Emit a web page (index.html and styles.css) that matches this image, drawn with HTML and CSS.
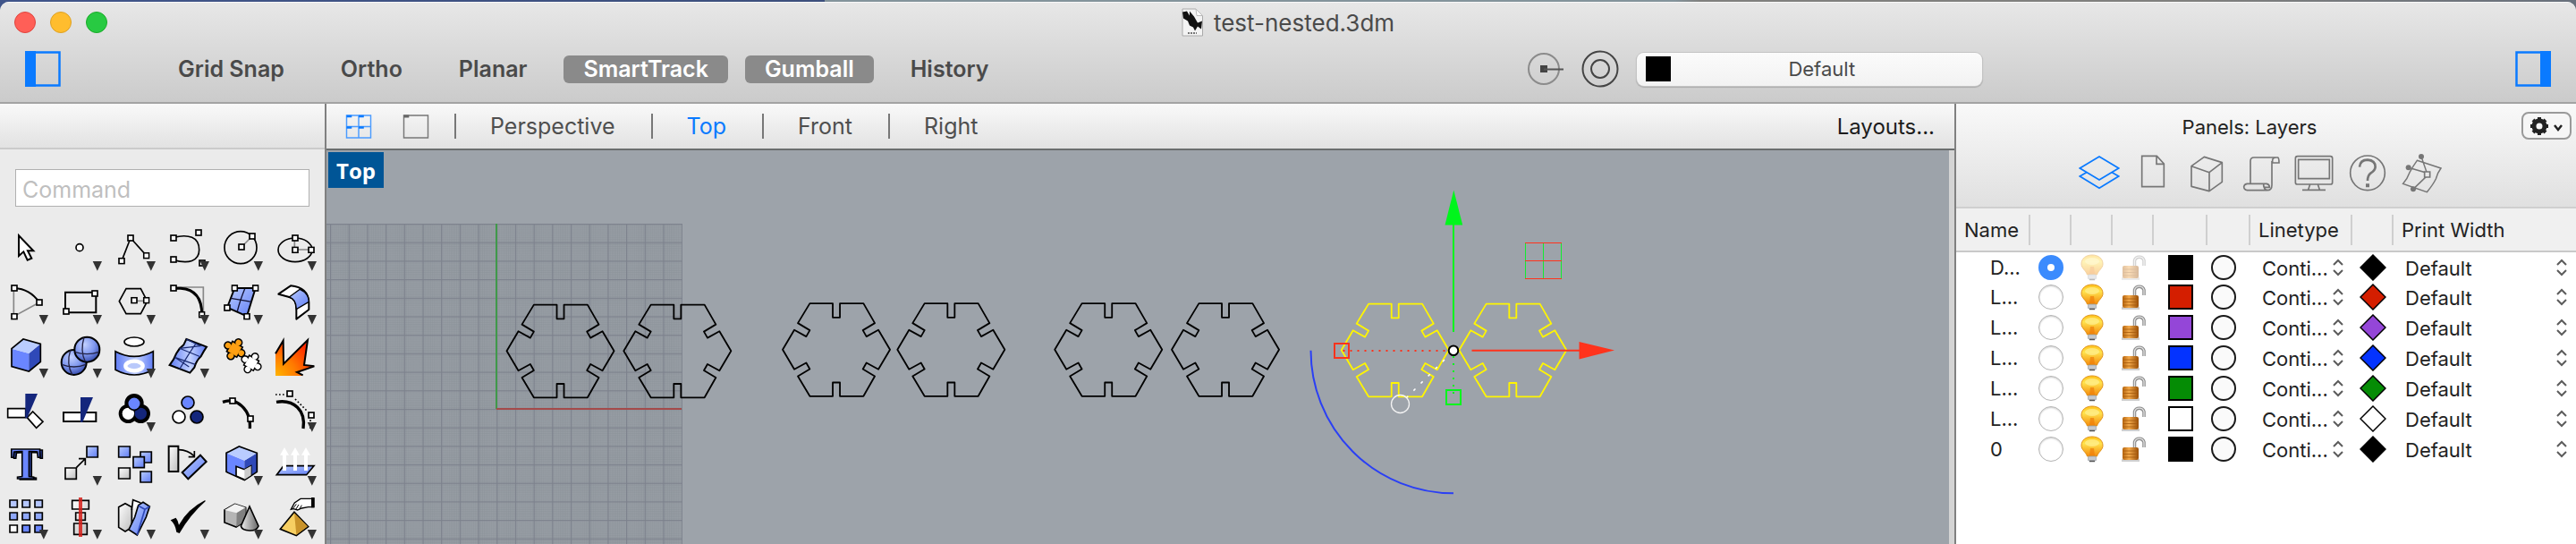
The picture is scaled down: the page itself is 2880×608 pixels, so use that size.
FILE: index.html
```html
<!DOCTYPE html>
<html lang="en">
<head>
<meta charset="utf-8">
<title>test-nested.3dm</title>
<link rel="stylesheet" href="styles.css">
</head>
<body>
<svg class="defs" aria-hidden="true">
  <defs>
    <linearGradient id="blue" x1="0" y1="0" x2="1" y2="1"><stop offset="0" stop-color="#b9ccff"/><stop offset="1" stop-color="#5f7cf4"/></linearGradient>
    <linearGradient id="grey" x1="0" y1="0" x2="1" y2="1"><stop offset="0" stop-color="#fff"/><stop offset="1" stop-color="#bdbdbd"/></linearGradient>
    <linearGradient id="cone" x1="0" y1="0" x2="1" y2="0"><stop offset="0" stop-color="#eee"/><stop offset="1" stop-color="#666"/></linearGradient>
    <linearGradient id="sheet" x1="0" y1="0" x2="1" y2="0"><stop offset="0" stop-color="#5f7cf4"/><stop offset=".55" stop-color="#c3d2ff"/><stop offset="1" stop-color="#5f7cf4"/></linearGradient>
    <radialGradient id="ball" cx=".4" cy=".3" r=".8"><stop offset="0" stop-color="#c3d1ff"/><stop offset=".5" stop-color="#7f97ee"/><stop offset="1" stop-color="#24389c"/></radialGradient>
    <radialGradient id="fire" cx="0" cy="1" r="1.1"><stop offset="0" stop-color="#ffb400"/><stop offset=".5" stop-color="#ff7a00"/><stop offset="1" stop-color="#ff2a00"/></radialGradient>
    <linearGradient id="glass" x1="0" y1="0" x2="0" y2="1"><stop offset="0" stop-color="#ffc21a"/><stop offset=".35" stop-color="#ffe34d"/><stop offset="1" stop-color="#f58a0c"/></linearGradient>
    <linearGradient id="brass" x1="0" y1="0" x2="1" y2="0"><stop offset="0" stop-color="#b5640e"/><stop offset=".4" stop-color="#f3a94a"/><stop offset="1" stop-color="#9a4f08"/></linearGradient>
    <pattern id="minor" x="369.5" y="250.4" width="2.069" height="2.069" patternUnits="userSpaceOnUse"><path d="M0 .35H2.07M.35 0V2.07" stroke="#8b9199" stroke-width=".4"/></pattern>
    <pattern id="major" x="369" y="250" width="20.69" height="20.69" patternUnits="userSpaceOnUse"><path d="M0 .6H20.7M.6 0V20.7" stroke="#7d828d" stroke-width="1.200"/></pattern>
  </defs>
  <symbol id="node" viewBox="0 0 24 24"><rect x="3" y="3" width="18" height="18" fill="#fff" stroke="#000" stroke-width="5"/></symbol>
  <symbol id="more" viewBox="0 0 180 180"><path d="M131 126H162L146.500 158Z" fill="#333"/></symbol>
  <symbol id="jigsaw" viewBox="0 0 90 90" overflow="visible"><g transform="rotate(30 45 45)"><rect x="27" y="27" width="36" height="36"/><circle cx="45" cy="18" r="10"/><circle cx="72" cy="45" r="10"/><circle cx="45" cy="72" r="10"/><circle cx="18" cy="45" r="10"/></g></symbol>
  <symbol id="hex" viewBox="-190 -165 380 330"><path d="M-89-155H-12V-108H12V-155H91L129-89 89-65 101-44 141-66 180 0 141 66 101 44 89 65 129 89 91 156H12V110H-12V156H-89L-129 89-89 65-101 44-141 66-180 0-141-66-101-44-89-65-129-89Z" fill="none" stroke="currentColor" stroke-width="5.500" stroke-linejoin="round"/></symbol>
  <symbol id="bulb" viewBox="0 0 26 30"><path d="M13 1C6 1 1 5 1 11C1 16 6 18 7.500 23H18.500C20 18 25 16 25 11C25 5 20 1 13 1Z" fill="url(#glass)" stroke="#e0931a"/><ellipse cx="13" cy="8" rx="8" ry="4" fill="#fff4a0" opacity=".6"/><path d="M10 22 11 14H15L16 22Z" fill="#ee7d08" opacity=".7"/><rect x="8.500" y="23" width="9" height="5" rx="1" fill="#c4c8cc" stroke="#8d9298" stroke-width=".6"/><path d="M10 28.500H16" stroke="#555" stroke-width="1.500"/></symbol>
  <symbol id="lock" viewBox="0 0 28 30"><path d="M15.500 14V7A5.500 5.500 0 0 1 26 7V13" fill="none" stroke="#8c8c8c" stroke-width="3.500"/><path d="M15.500 14V7A5.500 5.500 0 0 1 26 7V13" fill="none" stroke="#e2e2e2" stroke-width="1.300"/><path d="M1 27.500H21" stroke="#cfcfcf" stroke-width="3"/><rect x="2" y="13" width="18" height="14" rx="2" fill="url(#brass)"/><path d="M3 17H19M3 20.500H19M3 24H19" stroke="#a65b0c" stroke-width=".8"/></symbol>
  <symbol id="step" viewBox="0 0 12 20"><path d="M1 7 6 2 11 7M1 13 6 18 11 13" fill="none" stroke="#5c5c5c" stroke-width="2"/></symbol>
  <symbol id="diamond" viewBox="0 0 30 30"><path d="M15 1 29 15 15 29 1 15Z" fill="currentColor" stroke="#000" stroke-width="1.500"/></symbol>
</svg>

<div class="window">
  <header class="chrome">
    <div class="titlebar">
      <div class="lights"><button class="light close" aria-label="Close"></button><button class="light minimise" aria-label="Minimise"></button><button class="light zoom" aria-label="Zoom"></button></div>
      <h1 class="title">
        <svg class="doc" viewBox="0 0 24 31"><path d="M1 .5H16L23.500 8V30.500H1Z" fill="#f3f3f3" stroke="#aaa"/><path d="M16 .5 17 8H23.500Z" fill="#fff" stroke="#bbb"/><path d="M1 4 6 3 9 8 9 3 14 9 18 16 23 14 22 23 18 20 15 25 13 21 9 19 7 14 2 11Z" fill="#111"/><path d="M7 27.500H17" stroke="#777" stroke-width="2" stroke-dasharray="2 1"/></svg>
        test-nested.3dm
      </h1>
    </div>
    <div class="toolbar">
      <button class="bare" aria-label="Toggle left sidebar"><svg class="side" viewBox="0 0 40 40"><path d="M1.500 1.500H38.500V38.500H1.500Z" fill="none" stroke="#0a7aff" stroke-width="2.500"/><path d="M0 0H12V40H0Z" fill="#0a7aff"/></svg></button>
      <nav class="modes">
        <button class="mode">Grid Snap</button><button class="mode">Ortho</button><button class="mode">Planar</button><button class="mode on">SmartTrack</button><button class="mode on">Gumball</button><button class="mode">History</button>
      </nav>
      <div class="layer">
        <button class="bare" aria-label="Record history"><svg class="rec" viewBox="0 0 40 40"><circle cx="18" cy="20" r="17" fill="none" stroke="#8b8b8b" stroke-width="2"/><path d="M14 16H22V24H14Z" fill="#444"/><path d="M18 20.500H40" stroke="#555" stroke-width="2"/></svg></button>
        <button class="bare" aria-label="Object properties"><svg class="ring" viewBox="0 0 42 42"><circle cx="21" cy="21" r="19.500" fill="none" stroke="#444" stroke-width="2"/><circle cx="21" cy="21" r="10" fill="none" stroke="#444" stroke-width="2"/></svg></button>
        <button class="picker"><span class="chip"></span><span class="picked">Default</span></button>
      </div>
      <button class="bare" aria-label="Toggle right sidebar"><svg class="side" viewBox="0 0 40 40"><path d="M1.500 1.500H38.500V38.500H1.500Z" fill="none" stroke="#0a7aff" stroke-width="2.500"/><path d="M28 0H40V40H28Z" fill="#0a7aff"/></svg></button>
    </div>
  </header>

  <div class="body">
    <aside class="tools">
      <div class="strip"></div>
      <div class="prompt"><input class="command" type="text" placeholder="Command" aria-label="Command"></div>
      <div class="palette">
        <button class="tool" aria-label="Select"><svg viewBox="0 0 180 180"><path d="M63 40V108L79 94 92 122 106 116 93 91H112Z" fill="#fff" stroke="#000" stroke-width="6"/></svg></button>
        <button class="tool" aria-label="Point"><svg viewBox="0 0 180 180"><circle cx="87" cy="80" r="12" fill="#fff" stroke="#000" stroke-width="5"/><use href="#more"/></svg></button>
        <button class="tool" aria-label="Polyline"><svg viewBox="0 0 180 180"><path d="M48 125 78 48 131 107" fill="none" stroke="#000" stroke-width="5"/><use href="#node" x="36" y="113" width="24" height="24"/><use href="#node" x="66" y="36" width="24" height="24"/><use href="#node" x="119" y="95" width="24" height="24"/><use href="#more"/></svg></button>
        <button class="tool" aria-label="Curve"><svg viewBox="0 0 180 180"><path d="M42 46C92 34 128 44 128 88C128 126 92 136 42 122" fill="none" stroke="#000" stroke-width="5"/><use href="#node" x="30" y="36" width="24" height="24"/><use href="#node" x="30" y="108" width="24" height="24"/><use href="#node" x="114" y="18" width="24" height="24"/><use href="#node" x="126" y="120" width="24" height="24"/><use href="#more"/></svg></button>
        <button class="tool" aria-label="Circle"><svg viewBox="0 0 180 180"><circle cx="87" cy="80" r="54" fill="none" stroke="#000" stroke-width="5"/><path d="M90 78 126 42" stroke="#888" stroke-width="5"/><use href="#node" x="78" y="66" width="24" height="24"/><use href="#node" x="114" y="30" width="24" height="24"/><use href="#more"/></svg></button>
        <button class="tool" aria-label="Ellipse"><svg viewBox="0 0 180 180"><ellipse cx="90" cy="88" rx="57" ry="40" fill="none" stroke="#000" stroke-width="5"/><path d="M88 50V87H142" fill="none" stroke="#888" stroke-width="5"/><use href="#node" x="78" y="36" width="24" height="24"/><use href="#node" x="78" y="76" width="24" height="24"/><use href="#node" x="132" y="76" width="24" height="24"/><use href="#more"/></svg></button>

        <button class="tool" aria-label="Arc"><svg viewBox="0 0 180 180"><path d="M46 36V131L132 84" fill="none" stroke="#888" stroke-width="5"/><path d="M48 36Q100 38 132 84" fill="none" stroke="#000" stroke-width="6"/><use href="#node" x="36" y="24" width="24" height="24"/><use href="#node" x="120" y="72" width="24" height="24"/><use href="#node" x="36" y="119" width="24" height="24"/><use href="#more"/></svg></button>
        <button class="tool" aria-label="Rectangle"><svg viewBox="0 0 180 180"><path d="M39 50H142V118H39Z" fill="none" stroke="#000" stroke-width="6"/><use href="#node" x="126" y="42" width="24" height="24"/><use href="#node" x="30" y="102" width="24" height="24"/><use href="#more"/></svg></button>
        <button class="tool" aria-label="Polygon"><svg viewBox="0 0 180 180"><path d="M40 80 63 38H112L134 80 112 122H63Z" fill="none" stroke="#000" stroke-width="5"/><path d="M90 79H131" stroke="#888" stroke-width="5"/><use href="#node" x="78" y="65" width="24" height="24"/><use href="#node" x="119" y="65" width="24" height="24"/><use href="#more"/></svg></button>
        <button class="tool" aria-label="Fillet"><svg viewBox="0 0 180 180"><path d="M42 33H142V126" fill="none" stroke="#888" stroke-width="5"/><path d="M42 37H66Q138 42 137 126" fill="none" stroke="#000" stroke-width="9"/><use href="#node" x="30" y="24" width="24" height="24"/><use href="#node" x="125" y="113" width="24" height="24"/><use href="#more"/></svg></button>
        <button class="tool" aria-label="Surface from points"><svg viewBox="0 0 180 180"><path d="M67 36H137L108 130 42 101Z" fill="url(#blue)" stroke="#000" stroke-width="6"/><path d="M54 70Q90 76 124 82M101 38Q84 80 76 114" fill="none" stroke="#113" stroke-width="4"/><use href="#node" x="55" y="24" width="24" height="24"/><use href="#node" x="125" y="24" width="24" height="24"/><use href="#node" x="30" y="90" width="24" height="24"/><use href="#node" x="96" y="119" width="24" height="24"/><use href="#more"/></svg></button>
        <button class="tool" aria-label="Extend surface"><svg viewBox="0 0 180 180"><path d="M34 56 75 28Q134 34 136 84V108L94 140V106Q94 70 70 66Z" fill="#fff" stroke="#000" stroke-width="6" stroke-linejoin="round"/><path d="M70 66 106 40Q136 54 136 82L94 107Q94 74 70 66Z" fill="url(#blue)" stroke="#000" stroke-width="4"/><use href="#more"/></svg></button>

        <button class="tool" aria-label="Box"><svg viewBox="0 0 180 180"><path d="M39 59 97 75V135L39 119Z" fill="#6a86ff"/><path d="M97 75 136 43V103L97 135Z" fill="#2f49b8"/><path d="M39 59 78 27 136 43 97 75Z" fill="#b9ccff"/><path d="M39 59 78 27 136 43V103L97 135 39 119Z" fill="none" stroke="#000" stroke-width="5"/><use href="#more"/></svg></button>
        <button class="tool" aria-label="Solids"><svg viewBox="0 0 180 180"><circle cx="68" cy="105" r="42" fill="url(#ball)" stroke="#000" stroke-width="6"/><path d="M27 112Q68 128 108 112M56 64Q42 110 62 146" fill="none" stroke="#224" stroke-width="4"/><circle cx="112" cy="62" r="42" fill="url(#ball)" stroke="#000" stroke-width="6"/><path d="M71 70Q112 84 152 70M102 21Q88 66 106 103" fill="none" stroke="#224" stroke-width="4"/><use href="#more"/></svg></button>
        <button class="tool" aria-label="Project curve"><svg viewBox="0 0 180 180"><ellipse cx="90" cy="36" rx="33" ry="15" fill="#fff" stroke="#000" stroke-width="5"/><path d="M27 68Q90 102 154 68V130Q90 164 27 130Z" fill="url(#sheet)" stroke="#000" stroke-width="5"/><ellipse cx="90" cy="117" rx="29" ry="16" fill="#b9c9fb" stroke="#fff" stroke-width="13"/><use href="#more"/></svg></button>
        <button class="tool" aria-label="Surface edit"><svg viewBox="0 0 180 180"><path d="M85 27 153 53Q144 66 134 85Q118 100 112 122L97 140 29 114Q44 96 52 74Q62 56 76 46Z" fill="url(#sheet)" stroke="#000" stroke-width="6"/><path d="M62 58 132 86M46 88 115 112M118 40 94 76 62 128M85 27 132 50 62 58M46 88 94 120" fill="none" stroke="#1a2a70" stroke-width="3.500"/><use href="#more"/></svg></button>
        <button class="tool" aria-label="Join"><svg viewBox="0 0 180 180">
          <use href="#jigsaw" x="24" y="18" width="86" height="86" fill="#ffa013" stroke="#000" stroke-width="10"/><use href="#jigsaw" x="24" y="18" width="86" height="86" fill="#ffa013"/>
          <use href="#jigsaw" x="82" y="66" width="82" height="82" fill="#fff" stroke="#000" stroke-width="10"/><use href="#jigsaw" x="82" y="66" width="82" height="82" fill="#fff"/></svg></button>
        <button class="tool" aria-label="Explode"><svg viewBox="0 0 180 180"><path d="M24 76 50 32V110L132 30 120 114 154 118 96 138 116 150H24Z" fill="url(#fire)"/><path d="M24 76 50 32 51 110 132 30 120 114 154 118 96 138 116 148" fill="none" stroke="#000" stroke-width="6"/></svg></button>

        <button class="tool" aria-label="Trim"><svg viewBox="0 0 180 180"><path d="M26 80H86V110H26ZM110 90 144 124 122 145 91 110Z" fill="#fff" stroke="#000" stroke-width="5"/><path d="M85 30H126L91 112H85Z" fill="#14267c"/></svg></button>
        <button class="tool" aria-label="Split"><svg viewBox="0 0 180 180"><path d="M33 93H142V123H33Z" fill="#fff" stroke="#000" stroke-width="6"/><path d="M90 42H132L97 125H90Z" fill="#14267c"/></svg></button>
        <button class="tool" aria-label="Group"><svg viewBox="0 0 180 180"><g stroke="#000" stroke-width="20"><circle cx="90" cy="62" r="22"/><circle cx="70" cy="97" r="22"/><circle cx="112" cy="97" r="22"/></g><circle cx="70" cy="97" r="20" fill="#fff"/><circle cx="112" cy="97" r="20" fill="#14267c"/><circle cx="90" cy="63" r="22" fill="#6a86ff" stroke="#000" stroke-width="5"/><use href="#more"/></svg></button>
        <button class="tool" aria-label="Ungroup"><svg viewBox="0 0 180 180"><g stroke="#000" stroke-width="5"><circle cx="90" cy="60" r="21" fill="#6a86ff"/><circle cx="60" cy="108" r="21" fill="#fff"/><circle cx="120" cy="108" r="21" fill="#14267c"/></g></svg></button>
        <button class="tool" aria-label="Edit points"><svg viewBox="0 0 180 180"><path d="M27 58Q52 50 68 56Q122 82 118 147" fill="none" stroke="#000" stroke-width="10"/><use href="#node" x="48" y="42" width="24" height="24"/><use href="#node" x="108" y="102" width="24" height="24"/></svg></button>
        <button class="tool" aria-label="Control points"><svg viewBox="0 0 180 180"><path d="M27 58C86 48 126 86 117 147" fill="none" stroke="#000" stroke-width="10"/><path d="M24 33H60M90 48 132 90M141 118V150" fill="none" stroke="#000" stroke-width="5" stroke-dasharray="5 7"/><use href="#node" x="60" y="18" width="24" height="24"/><use href="#node" x="132" y="90" width="24" height="24"/><use href="#more"/></svg></button>

        <button class="tool" aria-label="Text"><svg viewBox="0 0 180 180"><text class="solid-text dark" x="94" y="138">T</text><text class="solid-text" x="86" y="136">T</text></svg></button>
        <button class="tool" aria-label="Move"><svg viewBox="0 0 180 180"><path d="M39 99H76V136H39Z" fill="url(#grey)" stroke="#000" stroke-width="5"/><path d="M111 27H148V63H111Z" fill="url(#blue)" stroke="#000" stroke-width="5"/><path d="M76 98 105 69M84 68H106V90" fill="none" stroke="#000" stroke-width="5"/><use href="#more"/></svg></button>
        <button class="tool" aria-label="Copy"><svg viewBox="0 0 180 180"><g fill="url(#blue)" stroke="#000" stroke-width="5"><path d="M38 27H76V63H38Z"/><path d="M111 45H148V81H111Z"/><path d="M87 62H124V98H87Z"/><path d="M111 111H148V147H111Z"/></g><path d="M38 99H76V135H38Z" fill="url(#grey)" stroke="#000" stroke-width="5"/></svg></button>
        <button class="tool" aria-label="Rotate"><svg viewBox="0 0 180 180"><path d="M26 26H58V111H26Z" fill="url(#grey)" stroke="#000" stroke-width="6"/><path d="M60 38Q90 38 112 60M112 42V62H92" fill="none" stroke="#000" stroke-width="5"/><path d="M132 56 152 78 91 136 71 114Z" fill="url(#blue)" stroke="#000" stroke-width="6"/></svg></button>
        <button class="tool" aria-label="Boolean"><svg viewBox="0 0 180 180"><path d="M39 49 100 74V140L39 112Z" fill="#6a86ff"/><path d="M100 74 142 49V110L100 140Z" fill="#2f49b8"/><path d="M39 49 82 27 142 49 100 74Z" fill="#b9ccff"/><path d="M39 49 82 27 142 49V112L100 140 39 112Z" fill="none" stroke="#000" stroke-width="5"/><path d="M72 94 100 104 122 92V124L100 138 72 126Z" fill="#fff" stroke="#000" stroke-width="5"/><path d="M100 104 122 92V124L100 138Z" fill="#ccc"/><use href="#more"/></svg></button>
        <button class="tool" aria-label="Extrude"><svg viewBox="0 0 180 180"><path d="M51 92H153L128 122H28Z" fill="url(#blue)" stroke="#000" stroke-width="5"/><path d="M54 108V50M90 108V50M126 108V50" stroke="#fff" stroke-width="12"/><path d="M39 56 54 30 69 56ZM75 56 90 30 105 56ZM111 56 126 30 141 56Z" fill="#fff"/><use href="#more"/></svg></button>

        <button class="tool" aria-label="Array"><svg viewBox="0 0 180 180"><g stroke="#000" stroke-width="5" fill="#b4c6ff"><path d="M33 27H58V51H33ZM75 27H100V51H75ZM117 27H142V51H117Z"/><path d="M33 69H58V93H33ZM75 69H100V93H75ZM117 69H142V93H117Z" fill="#8fa8fb"/><path d="M33 111H58V135H33Z" fill="#fff"/><path d="M75 111H100V135H75ZM117 111H142V135H117Z" fill="#6a86ff"/></g><use href="#more"/></svg></button>
        <button class="tool" aria-label="Mirror"><svg viewBox="0 0 180 180"><path d="M62 28H118V57H62ZM74 69H106V94H74ZM68 105H112V142H68Z" fill="url(#grey)" stroke="#000" stroke-width="5"/><path d="M90 18V150" stroke="#d6201a" stroke-width="12" opacity=".85"/><use href="#more"/></svg></button>
        <button class="tool" aria-label="Orient"><svg viewBox="0 0 180 180"><path d="M38 50 60 38 82 50V118L60 132 38 118Z" fill="url(#grey)" stroke="#000" stroke-width="5"/><path d="M82 60 86 26 112 36" fill="#fff" stroke="#000" stroke-width="5"/><path d="M104 44 120 34 142 48 130 84 100 144 72 126 92 84Z" fill="url(#blue)" stroke="#000" stroke-width="5"/><path d="M104 46 126 58 142 48M126 58 100 144" fill="none" stroke="#2f49b8" stroke-width="5"/><use href="#more"/></svg></button>
        <button class="tool" aria-label="Check"><svg viewBox="0 0 180 180"><path d="M32 94 50 86Q58 96 60 110Q90 56 148 27L149 31Q98 76 62 138L52 134Q48 108 32 94Z"/><use href="#more"/></svg></button>
        <button class="tool" aria-label="Shading"><svg viewBox="0 0 180 180"><path d="M33 60 68 40 104 52V96L72 117 33 102Z" fill="#b5b5b5" stroke="#000" stroke-width="5"/><path d="M33 60 68 40 104 52 74 70Z" fill="#f2f2f2"/><path d="M74 70 104 52V96L73 116Z" fill="#808080"/><path d="M117 48 147 114Q140 130 117 129Q92 128 88 114Z" fill="url(#cone)" stroke="#000" stroke-width="5"/><use href="#more"/></svg></button>
        <button class="tool" aria-label="Drag"><svg viewBox="0 0 180 180"><path d="M152 22V50H134L112 54 98 60 84 56 76 58 88 36 108 22Z" fill="#fff" stroke="#000" stroke-width="4"/><path d="M94 40 82 56M102 42 92 58M112 44 104 58" stroke="#000" stroke-width="3"/><path d="M144 18H155V52H144Z"/><path d="M87 67 134 116 94 146 40 124Z" fill="#f7cf62" stroke="#000" stroke-width="5"/><path d="M87 70 132 115 94 143Z" fill="#c9932a"/><use href="#more"/></svg></button>
      </div>
    </aside>

    <main class="stage">
      <nav class="tabs">
        <button class="bare" aria-label="Four viewports"><svg class="lay quad" viewBox="0 0 30 28"><path d="M1 1H29V27H1ZM15 1V27M1 14H29" fill="none" stroke="#4a9bff" stroke-width="1.500"/><path d="M1 2H7M15 2H21M1 15H7M15 15H21" stroke="#0a7aff" stroke-width="2.500"/></svg></button>
        <button class="bare" aria-label="Single viewport"><svg class="lay single" viewBox="0 0 30 28"><path d="M1 1H29V27H1Z" fill="none" stroke="#777" stroke-width="1.500"/><path d="M1 2H7" stroke="#666" stroke-width="3"/></svg></button>
        <button class="tab">Perspective</button><button class="tab active">Top</button><button class="tab">Front</button><button class="tab">Right</button>
        <button class="layouts">Layouts...</button>
      </nav>
      <div class="canvas">
        <svg class="drawing" aria-label="Top viewport">
          <g transform="translate(-365 -168)">
            <rect x="365" y="250" width="397.500" height="500" fill="#979da4"/>
            <rect x="365" y="250" width="397.500" height="500" fill="url(#minor)"/>
            <rect x="365" y="250" width="398" height="500" fill="url(#major)"/>
            <path d="M555 250V457" stroke="#40994a" stroke-width="2"/>
            <path d="M555 457H762" stroke="#a44a4a" stroke-width="2"/>
            <g class="ink">
              <use href="#hex" x="563.200" y="337.300" width="126.667" height="110"/>
              <use href="#hex" x="694" y="337.300" width="126.667" height="110"/>
              <use href="#hex" x="871.700" y="335.800" width="126.667" height="110"/>
              <use href="#hex" x="1000" y="335.800" width="126.667" height="110"/>
              <use href="#hex" x="1175.900" y="335.800" width="126.667" height="110"/>
              <use href="#hex" x="1306.700" y="335.800" width="126.667" height="110"/>
            </g>
            <g class="picked-ink">
              <use href="#hex" x="1496.400" y="336.300" width="126.667" height="110"/>
              <use href="#hex" x="1628" y="336.300" width="126.667" height="110"/>
            </g>
            <path d="M1465.500 391.700A159.500 159.500 0 0 0 1625 551.300" fill="none" stroke="#2a3ff5" stroke-width="2"/>
            <path d="M1625 371V250" stroke="#00f51c" stroke-width="2"/><path d="M1615.500 251.500 1625.300 212.500 1635.200 251.500Z" fill="#00f51c"/>
            <path d="M1645.500 391.700H1766" stroke="#ff331c" stroke-width="2"/><path d="M1765.500 382 1805 391.500 1765.500 401.500Z" fill="#ff331c"/>
            <path d="M1501.500 392H1617" stroke="#ff331c" stroke-width="2" stroke-dasharray="2 6"/>
            <path d="M1625 398V440" stroke="#00f51c" stroke-width="2" stroke-dasharray="2 6"/>
            <path d="M1615 402 1570 447" stroke="#fff" stroke-width="1.500" stroke-dasharray="3 8.500"/>
            <rect x="1492" y="384" width="16" height="16" fill="none" stroke="#ff331c" stroke-width="2"/>
            <rect x="1617" y="436" width="16" height="16" fill="none" stroke="#00f51c" stroke-width="2"/>
            <circle cx="1565.500" cy="451.500" r="10" fill="none" stroke="#f3f3f3" stroke-width="1.300"/>
            <path d="M1705.500 271V311.500M1725.500 271V311.500M1745.500 271V311.500" stroke="#12ec30"/>
            <path d="M1705 271.500H1746M1705 291.500H1746M1705 311.500H1746" stroke="#ff331c"/>
            <circle cx="1625" cy="391.700" r="5.300" fill="#fff" stroke="#000" stroke-width="2"/>
          </g>
        </svg>
        <span class="view-name">Top</span>
      </div>
    </main>

    <aside class="panel">
      <div class="panel-head">
        <div class="panel-title"><h2>Panels: Layers</h2>
          <button class="gear" aria-label="Panel options"><svg viewBox="0 0 46 26"><g stroke="#222" stroke-width="4"><path d="M14 3V23M4 13H24M7 6 21 20M21 6 7 20"/></g><circle cx="14" cy="13" r="6" fill="#f6f6f6" stroke="#222" stroke-width="5"/><path d="M31 12 35 17 39 12" fill="none" stroke="#222" stroke-width="2.500"/></svg></button>
        </div>
        <div class="panel-tabs">
          <button class="bare" aria-label="Layers"><svg viewBox="0 0 138 132"><g fill="none" stroke="#0a7aff" stroke-width="5"><path d="M69 9 134 48 69 87 4 48Z"/><path d="M26 62 4 75 69 115 134 75 112 62"/></g></svg></button>
          <button class="bare" aria-label="Page"><svg viewBox="0 0 138 132"><path d="M32 7H82L106 33V110H32ZM81 7V34H106" fill="none" stroke="#767676" stroke-width="5"/></svg></button>
          <button class="bare" aria-label="Object"><svg viewBox="0 0 138 132"><path d="M18 41 61 10 121 29V94L78 125 18 109ZM18 41 78 62 121 29M78 62V125" fill="none" stroke="#767676" stroke-width="5" stroke-linejoin="round"/></svg></button>
          <button class="bare" aria-label="Notes"><svg viewBox="0 0 138 132"><path d="M36 100V24Q36 12 48 12H128Q132 14 132 30H110V20Q112 12 122 12M108 24V104Q108 122 92 122H26Q14 120 14 110Q16 100 26 100H90Q100 102 100 112H86Q80 112 80 106M80 102Q80 122 96 122" fill="none" stroke="#767676" stroke-width="5"/></svg></button>
          <button class="bare" aria-label="Display"><svg viewBox="0 0 138 132"><g fill="none" stroke="#767676" stroke-width="5"><rect x="7" y="8" width="124" height="94" rx="7"/><path d="M17 19H121V83H17ZM56 102 50 120M82 102 88 120M30 121H108"/></g></svg></button>
          <button class="bare" aria-label="Help"><svg viewBox="0 0 138 132"><ellipse cx="69" cy="64" rx="58" ry="58" fill="none" stroke="#767676" stroke-width="5"/><path d="M42 44Q44 20 69 20Q95 22 95 44Q94 56 80 64Q69 72 69 90" fill="none" stroke="#767676" stroke-width="8"/><path d="M63 100H75V112H63Z" fill="#767676"/></svg></button>
          <button class="bare" aria-label="Control net"><svg viewBox="0 0 138 132"><path d="M55 22 135 48Q124 62 118 84Q108 104 88 128L8 100Q22 84 30 62Q42 40 55 22ZM69 9 88 64 26 46M88 74 42 118" fill="none" stroke="#767676" stroke-width="4.500"/><path d="M80 60H98V78H80Z" fill="#e9e9e9" stroke="#767676" stroke-width="5"/><circle cx="69" cy="9" r="9" fill="#767676"/><circle cx="26" cy="46" r="9" fill="#767676"/><circle cx="42" cy="118" r="9" fill="#767676"/></svg></button>
        </div>
      </div>
      <table class="layers">
        <colgroup><col class="c-name"><col class="c-tiny"><col class="c-tiny"><col class="c-tiny"><col class="c-color"><col class="c-mat"><col class="c-line"><col class="c-tiny"><col></colgroup>
        <thead><tr><th>Name</th><th></th><th></th><th></th><th></th><th></th><th>Linetype</th><th></th><th>Print Width</th></tr></thead>
        <tbody>
          <tr class="black current"><td>D...</td><td><input type="radio" name="current" aria-label="Current layer" checked></td><td><svg class="bulb"><use href="#bulb"/></svg></td><td><svg class="lock"><use href="#lock"/></svg></td><td><button class="swatch" aria-label="Colour"></button></td><td><button class="material" aria-label="Material"></button></td><td><span class="pick"><select aria-label="Linetype"><option>Conti...</option></select><svg><use href="#step"/></svg></span></td><td><svg class="diamond"><use href="#diamond"/></svg></td><td><span class="pick"><select aria-label="Print width"><option>Default</option></select><svg><use href="#step"/></svg></span></td></tr>
          <tr class="red"><td>L...</td><td><input type="radio" name="current" aria-label="Current layer"></td><td><svg class="bulb"><use href="#bulb"/></svg></td><td><svg class="lock"><use href="#lock"/></svg></td><td><button class="swatch" aria-label="Colour"></button></td><td><button class="material" aria-label="Material"></button></td><td><span class="pick"><select aria-label="Linetype"><option>Conti...</option></select><svg><use href="#step"/></svg></span></td><td><svg class="diamond"><use href="#diamond"/></svg></td><td><span class="pick"><select aria-label="Print width"><option>Default</option></select><svg><use href="#step"/></svg></span></td></tr>
          <tr class="purple"><td>L...</td><td><input type="radio" name="current" aria-label="Current layer"></td><td><svg class="bulb"><use href="#bulb"/></svg></td><td><svg class="lock"><use href="#lock"/></svg></td><td><button class="swatch" aria-label="Colour"></button></td><td><button class="material" aria-label="Material"></button></td><td><span class="pick"><select aria-label="Linetype"><option>Conti...</option></select><svg><use href="#step"/></svg></span></td><td><svg class="diamond"><use href="#diamond"/></svg></td><td><span class="pick"><select aria-label="Print width"><option>Default</option></select><svg><use href="#step"/></svg></span></td></tr>
          <tr class="blue"><td>L...</td><td><input type="radio" name="current" aria-label="Current layer"></td><td><svg class="bulb"><use href="#bulb"/></svg></td><td><svg class="lock"><use href="#lock"/></svg></td><td><button class="swatch" aria-label="Colour"></button></td><td><button class="material" aria-label="Material"></button></td><td><span class="pick"><select aria-label="Linetype"><option>Conti...</option></select><svg><use href="#step"/></svg></span></td><td><svg class="diamond"><use href="#diamond"/></svg></td><td><span class="pick"><select aria-label="Print width"><option>Default</option></select><svg><use href="#step"/></svg></span></td></tr>
          <tr class="green"><td>L...</td><td><input type="radio" name="current" aria-label="Current layer"></td><td><svg class="bulb"><use href="#bulb"/></svg></td><td><svg class="lock"><use href="#lock"/></svg></td><td><button class="swatch" aria-label="Colour"></button></td><td><button class="material" aria-label="Material"></button></td><td><span class="pick"><select aria-label="Linetype"><option>Conti...</option></select><svg><use href="#step"/></svg></span></td><td><svg class="diamond"><use href="#diamond"/></svg></td><td><span class="pick"><select aria-label="Print width"><option>Default</option></select><svg><use href="#step"/></svg></span></td></tr>
          <tr class="white"><td>L...</td><td><input type="radio" name="current" aria-label="Current layer"></td><td><svg class="bulb"><use href="#bulb"/></svg></td><td><svg class="lock"><use href="#lock"/></svg></td><td><button class="swatch" aria-label="Colour"></button></td><td><button class="material" aria-label="Material"></button></td><td><span class="pick"><select aria-label="Linetype"><option>Conti...</option></select><svg><use href="#step"/></svg></span></td><td><svg class="diamond"><use href="#diamond"/></svg></td><td><span class="pick"><select aria-label="Print width"><option>Default</option></select><svg><use href="#step"/></svg></span></td></tr>
          <tr class="black"><td>0</td><td><input type="radio" name="current" aria-label="Current layer"></td><td><svg class="bulb"><use href="#bulb"/></svg></td><td><svg class="lock"><use href="#lock"/></svg></td><td><button class="swatch" aria-label="Colour"></button></td><td><button class="material" aria-label="Material"></button></td><td><span class="pick"><select aria-label="Linetype"><option>Conti...</option></select><svg><use href="#step"/></svg></span></td><td><svg class="diamond"><use href="#diamond"/></svg></td><td><span class="pick"><select aria-label="Print width"><option>Default</option></select><svg><use href="#step"/></svg></span></td></tr>
        </tbody>
      </table>
    </aside>
  </div>
</div>
</body>
</html>
```
FILE: styles.css
```css
* { box-sizing: border-box; }
body {
  margin: 0;
  height: 100vh;
  padding-top: 2px;
  display: flex;
  overflow: hidden;
  background: linear-gradient(90deg, #40558a 0, #3c4f7c 32%, #83939b 32%, #83939b 65%, #80807e 66%, #80807e 85%, #68707c);
  font-family: Inter, "Liberation Sans", sans-serif;
  font-size: 22px;
  color: #222;
}
button, input, select { font: inherit; color: inherit; margin: 0; }
button { border: 0; padding: 0; background: none; }
svg { display: block; }
.defs { position: absolute; width: 0; height: 0; }
.bare { display: block; flex: none; }

.window {
  flex: 1;
  min-width: 0;
  display: flex;
  flex-direction: column;
  border-radius: 10px 10px 0 0;
  overflow: hidden;
  background: #ebebeb;
}
.chrome {
  background: linear-gradient(#e7e7e7, #cbcbcb);
  border-top: 1px solid #f8f8f8;
  border-bottom: 2px solid #a3a3a3;
}
.titlebar {
  display: grid;
  grid-template-columns: 1fr auto 1fr;
  align-items: center;
  height: 44px;
  padding: 0 16px;
}
.lights { display: flex; gap: 16px; }
.light { width: 24px; height: 24px; border-radius: 50%; border: 1px solid; }
.close { background: #ff5f57; border-color: #e0443e; }
.minimise { background: #ffbd2e; border-color: #dea123; }
.zoom { background: #28ca42; border-color: #1aab29; }
.title {
  display: flex;
  align-items: center;
  gap: 12px;
  margin: 0;
  font-size: 26px;
  font-weight: 400;
  color: #4a4a4a;
}
.doc { width: 24px; height: 32px; }
.toolbar {
  display: flex;
  align-items: center;
  height: 67px;
  padding: 0 28px 7px;
}
.side { width: 40px; height: 40px; }
.modes { display: flex; gap: 19px; margin-left: 109px; }
.mode {
  height: 31px;
  padding: 0 22px;
  border-radius: 6px;
  font-size: 25px;
  line-height: 31px;
  font-weight: 600;
  color: #4a4a4a;
}
.mode.on { background: #8a8a8a; color: #fff; }
.layer { display: flex; align-items: center; gap: 20px; margin: 0 auto; padding-right: 16px; }
.rec { width: 40px; height: 40px; }
.ring { width: 42px; height: 42px; }
.picker {
  display: flex;
  align-items: center;
  width: 386px;
  height: 37px;
  padding: 0 10px;
  border-radius: 8px;
  background: linear-gradient(#fbfbfb, #f2f2f2);
  box-shadow: 0 0 0 1px #c4c4c4, 0 1px 1px 1px #aaa;
  color: #4a4a4a;
}
.chip { width: 28px; height: 28px; background: #000; }
.picked { flex: 1; }

.body { flex: 1; min-height: 0; display: flex; }
.tools { flex: none; width: 365px; border-right: 2px solid #808080; overflow: hidden; }
.strip { height: 51px; background: linear-gradient(#f9f9f9, #e2e2e2); border-bottom: 2px solid #cbcbcb; }
.prompt { padding: 22px 17px 19px; }
.command {
  display: block;
  width: 100%;
  height: 42px;
  padding: 4px 7px 0;
  border: 1px solid #b0b0b0;
  border-radius: 0;
  background: #fff;
  font-size: 25px;
}
.command::placeholder { color: #bfbfbf; opacity: 1; }
.palette { display: grid; grid-template-columns: repeat(6, 60px); }
.tool { width: 60px; height: 60px; }
.tool svg { width: 60px; height: 60px; }
.solid-text {
  font: bold 150px "Liberation Serif", serif;
  text-anchor: middle;
  fill: #6a86ff;
  stroke: #000;
  stroke-width: 5px;
}
.solid-text.dark { fill: #2f49b8; }

.stage { flex: 1; min-width: 0; display: flex; flex-direction: column; background: #d4d4d4; }
.tabs {
  flex: none;
  display: flex;
  align-items: center;
  height: 52px;
  padding: 0 22px 0 21px;
  background: linear-gradient(#f9f9f9, #e2e2e2);
  border-bottom: 2px solid #6b6e6e;
  font-size: 25px;
  color: #4f4f4f;
}
.lay { width: 30px; height: 27px; }
.quad { margin-right: 34px; }
.single { margin-right: 28px; }
.tab { height: 28px; padding: 0 40px 0 38px; line-height: 28px; border-left: 2px solid #777; }
.tab.active { color: #0a7aff; }
.layouts { margin-left: auto; font-size: 24px; color: #1c1c1c; }
.canvas { flex: 1; min-height: 0; position: relative; margin-right: 6px; background: #9da3aa; overflow: hidden; }
.drawing { width: 100%; height: 100%; }
.ink { color: #000; }
.picked-ink { color: #fff500; }
.view-name {
  position: absolute;
  left: 2px;
  top: 2px;
  padding: 0 9px;
  height: 40px;
  line-height: 42px;
  background: #005596;
  color: #fff;
  font-family: "Open Sans", sans-serif;
  font-size: 24px;
  font-weight: 700;
}

.panel { flex: none; width: 695px; border-left: 2px solid #808080; background: #fff; }
.panel-head { height: 117px; background: linear-gradient(#f9f9f9, #e0e0e0); border-bottom: 2px solid #cfcfcf; }
.panel-title {
  display: grid;
  grid-template-columns: 24px 1fr 56px;
  padding: 9px 5px 0 0;
}
h2 { grid-column: 2; margin: 0; font-size: 22px; line-height: 34px; font-weight: 400; text-align: center; }
.gear {
  width: 56px;
  height: 31px;
  border: 2px solid #9a9a9a;
  border-radius: 8px;
  background: #f6f6f6;
}
.gear svg { width: 46px; height: 26px; margin-left: 4px; }
.panel-tabs { display: flex; justify-content: center; gap: 14px; padding: 13px 14px 0 0; }
.panel-tabs svg { width: 46px; height: 44px; }
.layers { width: 100%; border-collapse: collapse; table-layout: fixed; }
.c-name { width: 83px; }
.c-tiny { width: 46px; }
.c-color { width: 60px; }
.c-mat { width: 48px; }
.c-line { width: 114px; }
.layers thead { background: #f0f0f0; border-bottom: 2px solid #c9c9c9; }
.layers th {
  height: 48px;
  padding: 0 0 0 9px;
  font-weight: 400;
  text-align: left;
  white-space: nowrap;
  background: linear-gradient(#cfcfcf, #cfcfcf) right center / 2px 34px no-repeat;
}
.layers th:last-child { background: none; }
.layers td { height: 34px; padding: 0; }
.layers td:first-child { padding-left: 38px; }
.layers td > * { margin: 0 auto; }
.layers input {
  display: block;
  appearance: none;
  width: 28px;
  height: 28px;
  border: 1px solid #b4b4b4;
  border-radius: 50%;
  background: #fff;
  box-shadow: inset 0 1px 2px #ccc;
}
.layers input:checked { border: 10px solid #3b8bfd; box-shadow: none; }
.bulb { width: 26px; height: 30px; }
.lock { width: 28px; height: 30px; }
.current .bulb, .current .lock { opacity: .4; }
.swatch { display: block; width: 28px; height: 28px; border: 2px solid #000; background: currentColor; }
.layers .material { display: block; width: 28px; height: 28px; border: 2px solid #1a1a1a; border-radius: 50%; background: #fafafa; margin-left: 4px; }
.diamond { width: 30px; height: 30px; }
.pick { display: grid; grid-template-columns: 1fr auto; align-items: center; padding: 0 10px 0 13px; color: #222; }
.pick select { grid-area: 1 / 1 / 2 / 3; width: 100%; appearance: none; border: 0; padding: 2px 0 0; background: none; }
.pick svg { grid-area: 1 / 2; width: 12px; height: 20px; pointer-events: none; }
.red .swatch, .red .diamond { color: #d41e00; }
.purple .swatch, .purple .diamond { color: #9446d8; }
.blue .swatch, .blue .diamond { color: #0433ff; }
.green .swatch, .green .diamond { color: #058c05; }
.white .swatch, .white .diamond { color: #fff; }
.black .swatch, .black .diamond { color: #000; }
```
